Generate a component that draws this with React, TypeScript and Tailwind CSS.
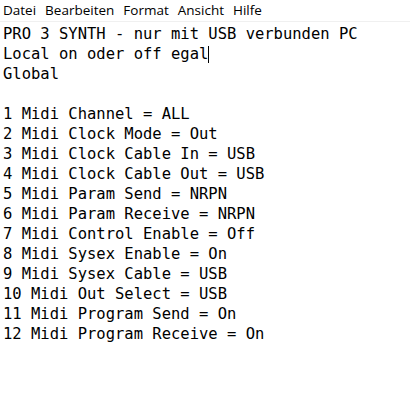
export default function App() {
  const lines = [
    "PRO 3 SYNTH - nur mit USB verbunden PC",
    "__CARET__",
    "Global",
    "",
    "1 Midi Channel = ALL",
    "2 Midi Clock Mode = Out",
    "3 Midi Clock Cable In = USB",
    "4 Midi Clock Cable Out = USB",
    "5 Midi Param Send = NRPN",
    "6 Midi Param Receive = NRPN",
    "7 Midi Control Enable = Off",
    "8 Midi Sysex Enable = On",
    "9 Midi Sysex Cable = USB",
    "10 Midi Out Select = USB",
    "11 Midi Program Send = On",
    "12 Midi Program Receive = On",
  ];
  return (
    <div className="w-[410px] h-[400px] bg-white overflow-hidden">
      <div
        className="h-[22px] flex items-center gap-[9px] pl-[3px] border-b border-[#f0f0f0] text-[13.5px] text-black"
        style={{ fontFamily: '"Open Sans", "Noto Sans", sans-serif' }}
      >
        <span>Datei</span>
        <span>Bearbeiten</span>
        <span>Format</span>
        <span>Ansicht</span>
        <span>Hilfe</span>
      </div>
      <div
        className="pl-[3px] pt-[2px] text-[15.5px] leading-[20px] text-black whitespace-pre"
        style={{ fontFamily: '"DejaVu Sans Mono", "Liberation Mono", monospace' }}
      >
        {lines.map((l, i) =>
          l === "__CARET__" ? (
            <div key={i} className="h-[20px] flex items-center">
              <span>Local on oder off egal</span>
              <span className="inline-block w-[1px] h-[17px] bg-black" />
            </div>
          ) : (
            <div key={i} className="h-[20px]">
              {l || "\u00a0"}
            </div>
          )
        )}
      </div>
    </div>
  );
}
